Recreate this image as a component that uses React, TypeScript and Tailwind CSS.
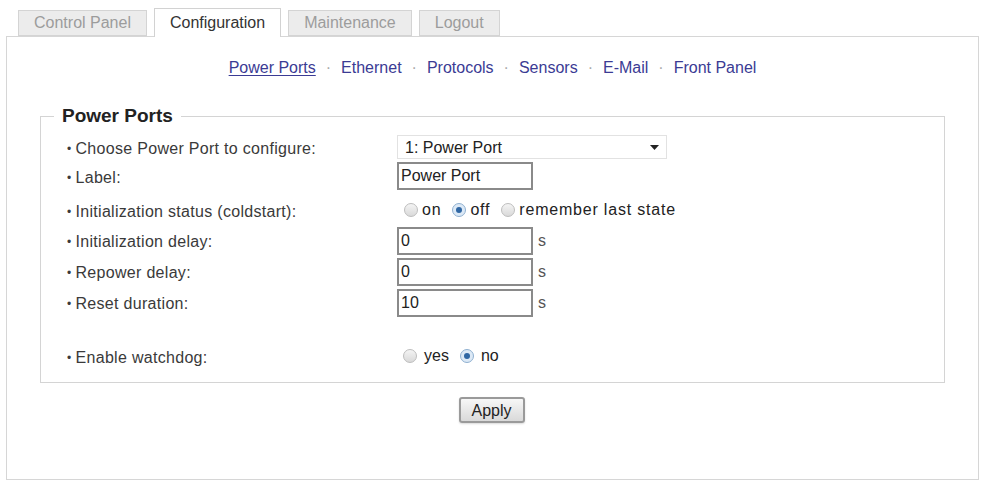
import React from 'react';

const tabs = [
    { name: 'Control Panel', active: false },
    { name: 'Configuration', active: true },
    { name: 'Maintenance', active: false },
    { name: 'Logout', active: false },
];

const links = ['Power Ports', 'Ethernet', 'Protocols', 'Sensors', 'E-Mail', 'Front Panel'];

function Radio({ checked, label, gap = 'gap-[4px]' }: { checked?: boolean; label: string; gap?: string }) {
    return (
        <label className={`inline-flex items-center ${gap} mr-[11px]`}>
            {checked ? (
                <span className="w-[14px] h-[14px] rounded-full border border-[#8fb0d0] bg-[#dce9f6] flex items-center justify-center">
                    <span className="w-[6px] h-[6px] rounded-full bg-[#2f66a3]" />
                </span>
            ) : (
                <span className="w-[14px] h-[14px] rounded-full border border-[#bdbdbd] bg-gradient-to-b from-[#f4f4f4] to-[#d9d9d9]" />
            )}
            <span>{label}</span>
        </label>
    );
}

function Row({ label, h, children, extra = '' }: { label: string; h: string; children: React.ReactNode; extra?: string }) {
    return (
        <div className={`flex items-center ${h} ${extra}`}>
            <div className="w-[330px] pt-[3px] text-[#3a3a3a] tracking-[0.3px]">
                <span className="text-[12px] mr-[4px] relative top-[-1px]">•</span>
                {label}
            </div>
            <div className="flex items-center">{children}</div>
        </div>
    );
}

function TextBox({ value, w = 'w-[136px]' }: { value: string; w?: string }) {
    return (
        <input
            readOnly
            value={value}
            className={`${w} h-[28px] border-2 border-[#8a8a8a] bg-white px-[2px] text-[16px] text-[#222] outline-none`}
        />
    );
}

export default function App() {
    return (
        <div className="w-[981px] h-[484px] bg-white pt-[8px] font-['Liberation_Sans',Arial,sans-serif] text-[16px]">
            <div className="flex items-end h-[28px] pl-[18px] gap-[7px]">
                {tabs.map((t) =>
                    t.active ? (
                        <div key={t.name} className="relative z-10 h-[29px] mb-[-1px] px-[15px] flex items-center bg-white border-x border-t border-[#d2d2d2] text-[#333]">
                            {t.name}
                        </div>
                    ) : (
                        <div key={t.name} className="h-[26px] px-[15px] flex items-center bg-[#ececec] border border-[#d4d4d4] text-[#9c9c9c]">
                            {t.name}
                        </div>
                    )
                )}
            </div>

            <div className="ml-[6px] w-[973px] border border-[#d6d6d6] pt-[21px] pb-[56px]">
                <div className="flex justify-center items-center h-[20px] gap-[10px] text-[#3b3b94]">
                    {links.map((l, i) => (
                        <React.Fragment key={l}>
                            {i > 0 && <span className="text-[#aaaaaa]">·</span>}
                            <a className={i === 0 ? 'underline underline-offset-2' : ''}>{l}</a>
                        </React.Fragment>
                    ))}
                </div>

                <fieldset className="mt-[27px] mx-[33px] border border-[#d4d4d4] pl-[13px] pt-[6px] pb-[11px]">
                    <legend className="px-[8px] text-[19px] leading-[22px] font-bold text-[#222]">Power Ports</legend>
                    <div className="pl-[13px]">
                        <Row label="Choose Power Port to configure:" h="h-[28px]">
                            <div className="relative">
                                <select className="appearance-none w-[270px] h-[24px] border border-[#e2e2e2] bg-white pl-[7px] text-[16px] text-[#222] outline-none">
                                    <option>1: Power Port</option>
                                </select>
                                <svg className="absolute right-[8px] top-[10px]" width="9" height="5" viewBox="0 0 9 5">
                                    <path d="M0 0h9L4.5 5z" fill="#222" />
                                </svg>
                            </div>
                        </Row>
                        <Row label="Label:" h="h-[30px]">
                            <TextBox value="Power Port" />
                        </Row>
                        <Row label="Initialization status (coldstart):" h="h-[34px]" extra="pt-[4px]">
                            <div className="flex items-center ml-[7px] text-[#222] tracking-[0.8px]">
                                <Radio label="on" />
                                <Radio label="off" checked />
                                <Radio label="remember last state" />
                            </div>
                        </Row>
                        <Row label="Initialization delay:" h="h-[31px]">
                            <TextBox value="0" />
                            <span className="ml-[5px] text-[#555]">s</span>
                        </Row>
                        <Row label="Repower delay:" h="h-[31px]">
                            <TextBox value="0" />
                            <span className="ml-[5px] text-[#555]">s</span>
                        </Row>
                        <Row label="Reset duration:" h="h-[31px]">
                            <TextBox value="10" />
                            <span className="ml-[5px] text-[#555]">s</span>
                        </Row>
                        <Row label="Enable watchdog:" h="h-[30px]" extra="mt-[23px]">
                            <div className="flex items-center ml-[6px] text-[#222]">
                                <Radio label="yes" gap="gap-[7px]" />
                                <Radio label="no" checked gap="gap-[7px]" />
                            </div>
                        </Row>
                    </div>
                </fieldset>

                <div className="flex justify-center mt-[14px]">
                    <button className="w-[66px] h-[26px] ml-[-2px] border-2 border-[#9a9a9a] rounded-[3px] bg-gradient-to-b from-[#f7f7f7] to-[#d9d9d9] text-[16px] text-[#222] shadow-[0_1px_2px_rgba(0,0,0,0.15)]">
                        Apply
                    </button>
                </div>
            </div>
        </div>
    );
}
